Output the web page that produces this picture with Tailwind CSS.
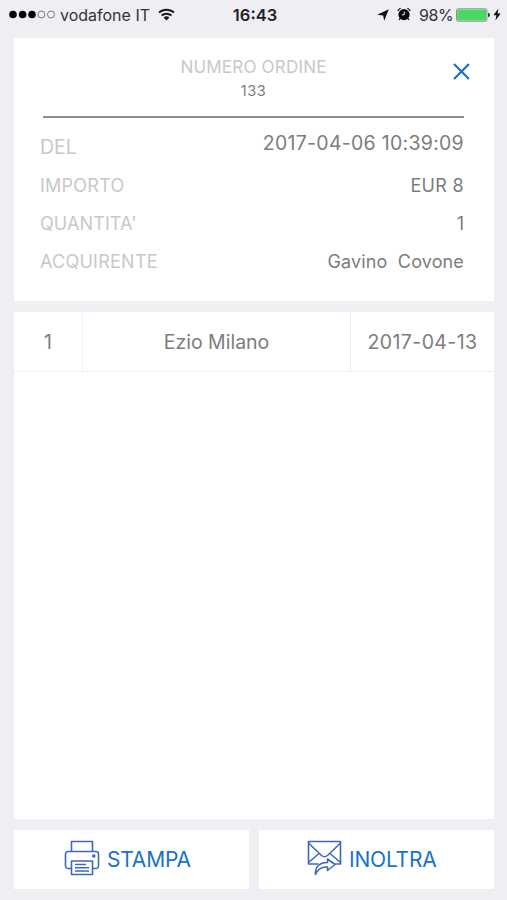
<!DOCTYPE html>
<html lang="it">
<head>
    <meta charset="UTF-8">
    <meta name="viewport" content="width=device-width, initial-scale=1.0">
    <title>Dettaglio ordine</title>
    <script src="https://cdn.jsdelivr.net/npm/@tailwindcss/browser@4"></script>
</head>
<body class="bg-[#eeeef3] h-[900px] overflow-hidden flex flex-col font-['Inter',sans-serif] text-[#7c7c7e]">
    <!-- Barra di stato -->
    <header class="h-[38px] shrink-0 grid grid-cols-[1fr_auto_1fr] items-start pl-[9px] pr-[6px] pt-[4px] text-[#333336]">
        <div class="flex items-center h-[22px]">
            <svg class="w-[47px] h-[10px]" viewBox="0 0 47 10">
                <g fill="#050505"><circle cx="4" cy="4.500" r="3.8"/><circle cx="13.6" cy="4.500" r="3.8"/><circle cx="23" cy="4.500" r="3.8"/></g>
                <g fill="none" stroke="#77777b"><circle cx="32.4" cy="4.500" r="3.5"/><circle cx="42" cy="4.500" r="3.5"/></g>
            </svg>
            <span class="ml-[4px] w-[90px] text-[16px] whitespace-nowrap">vodafone IT</span>
            <svg class="ml-[8px] mb-[2px] w-[17px] h-[13px]" viewBox="0 0 17 13" fill="none" stroke="#1b1b1d" stroke-width="2">
                <path d="M1 4.6a11 11 0 0 1 15 0M3.6 7.6a7.2 7.2 0 0 1 9.8 0"/>
                <path d="M5.6 9.6a4.3 4.3 0 0 1 5.8 0L8.5 12.6z" fill="#1b1b1d" stroke="none"/>
            </svg>
        </div>
        <div class="h-[22px] leading-[22px] text-[16.500px] font-semibold text-[#222225]">16:43</div>
        <div class="flex items-center justify-end h-[22px]">
            <svg class="mb-[1px] w-[12px] h-[12px]" viewBox="0 0 12 12"><path d="M11.8.2 7.200 11.8 6.2 6.500.2 5.800z" fill="#111"/></svg>
            <svg class="ml-[8px] mb-[2px] w-[14px] h-[14px]" viewBox="0 0 14 14">
                <circle cx="7" cy="7.6" r="5.6" fill="#0a0a0a"/>
                <path d="M.8 4A7 7 0 0 1 3.6 1.2M10.4 1.2A7 7 0 0 1 13.2 4M3.2 11.4 2 13M10.8 11.4 12 13" stroke="#0a0a0a" stroke-width="1.2" fill="none"/>
                <path d="M7.2 4.6v3.2H4.8" stroke="#eeeef3" fill="none"/>
            </svg>
            <span class="ml-[8px] w-[34px] text-[16px] tracking-[-0.4px]">98%</span>
            <svg class="ml-[3px] mb-[1px] w-[34px] h-[14px]" viewBox="0 0 34 14">
                <rect x=".5" y=".8" width="30.4" height="12.4" rx="1.5" fill="#eeeef3" stroke="#8b8f8c"/>
                <rect x="1.2" y="1.500" width="29" height="11" rx=".8" fill="#4bd763"/>
                <path d="M32 4.8q2 .4 2 2.2t-2 2.2z" fill="#333"/>
            </svg>
            <svg class="ml-[3px] mb-[2px] w-[8px] h-[13px]" viewBox="0 0 8 13"><path d="M5.4.6.4 7.3h3L2.4 12.4l5.3-7H4.6z" fill="#111"/></svg>
        </div>
    </header>

    <main class="flex-1 min-h-0 flex flex-col pl-[14px] pr-[13px] pb-[11px]">
        <!-- Riepilogo ordine -->
        <section class="h-[263px] shrink-0 bg-white pl-[26px] pr-[30px]">
            <div class="grid grid-cols-[30px_1fr_30px] h-[80px] border-b-2 border-[#8e8e90] ml-[3px]">
                <div class="col-start-2 text-center pt-[19px]">
                    <h1 class="text-[17px] leading-[20px] tracking-[0.2px] text-[#c8c8ca] whitespace-nowrap">NUMERO ORDINE</h1>
                    <p class="mt-[5px] text-[14.500px] leading-[18px] tracking-[0.5px]">133</p>
                </div>
                <button class="justify-self-end self-start mt-[25px] -mr-[6px]" aria-label="Chiudi">
                    <svg class="w-[17px] h-[17px]" viewBox="0 0 17 17" stroke="#1972c8" stroke-width="2.2"><path d="M1 1 16 16M16 1 1 16"/></svg>
                </button>
            </div>
            <dl class="text-[18px] leading-[38px] text-right">
                <div class="flex justify-between h-[49px]">
                    <dt class="pt-[10px] text-[19.5px] text-[#c8c8ca]">DEL</dt>
                    <dd class="pt-[6px] text-[19.5px] tracking-[0.28px] whitespace-nowrap">2017-04-06 10:39:09</dd>
                </div>
                <div class="flex justify-between h-[38px]">
                    <dt class="tracking-[0.25px] text-[#c8c8ca]">IMPORTO</dt>
                    <dd class="tracking-[0.3px]">EUR 8</dd>
                </div>
                <div class="flex justify-between h-[38px]">
                    <dt class="tracking-[0.1px] text-[#c8c8ca]">QUANTITA'</dt>
                    <dd>1</dd>
                </div>
                <div class="flex justify-between h-[38px]">
                    <dt class="tracking-[0.25px] text-[#c8c8ca]">ACQUIRENTE</dt>
                    <dd class="tracking-[0.14px] whitespace-pre">Gavino  Covone</dd>
                </div>
            </dl>
        </section>

        <!-- Elenco biglietti -->
        <section class="mt-[11px] flex-1 bg-white">
            <div class="grid grid-cols-[69px_268px_1fr] h-[60px] leading-[60px] text-center text-[19.5px] border-b border-[#efeff2]">
                <div class="border-r border-[#efeff2]">1</div>
                <div class="border-r border-[#efeff2]">Ezio Milano</div>
                <div class="tracking-[0.4px] whitespace-nowrap">2017-04-13</div>
            </div>
        </section>

        <!-- Azioni -->
        <footer class="mt-[11px] h-[59px] shrink-0 grid grid-cols-[235px_235px] gap-[10px] text-[21px] tracking-[-0.2px] text-[#1972c8]">
            <button class="bg-white flex items-center pl-[50px]">
                <svg class="mb-[3px] w-[36px] h-[36px]" viewBox="0 0 36 36" fill="none" stroke="#4068ba" stroke-width="1.6" stroke-linejoin="round">
                    <path d="M7.5 11.5V1.5h21v10"/>
                    <path d="M7.5 28.5H4A2.5 2.5 0 0 1 1.5 26V14A2.5 2.5 0 0 1 4 11.5h28a2.5 2.5 0 0 1 2.5 2.5v12a2.5 2.5 0 0 1-2.5 2.5h-3.5"/>
                    <path d="M7.5 21h21v13.500h-21z"/>
                    <path d="M11 24.500h11M11 27.800h14M11 31h14"/>
                    <circle cx="29.800" cy="16" r="1" fill="#4068ba"/>
                </svg>
                <span class="ml-[7px]">STAMPA</span>
            </button>
            <button class="bg-white flex items-center pl-[48px]">
                <svg class="mb-[3px] w-[36px] h-[36px]" viewBox="0 0 36 36" fill="none" stroke="#4068ba" stroke-width="1.6" stroke-linejoin="round">
                    <path d="M11.500 24H1.500V1.500h32V24h-5.500"/>
                    <path d="M1.500 3 14.500 15.500q3 2.500 6 0L33.500 3M1.500 22.500l10.500-9M33.500 22.500l-10.500-9"/>
                    <path d="M8.500 34.500C8 27 12 22.500 20.500 22.500v-3.500l7.500 5.500-7.500 6v-3.500c-6-.5-9.500 1.500-12 7.500z" fill="#fff"/>
                </svg>
                <span class="ml-[6px]">INOLTRA</span>
            </button>
        </footer>
    </main>
</body>
</html>
